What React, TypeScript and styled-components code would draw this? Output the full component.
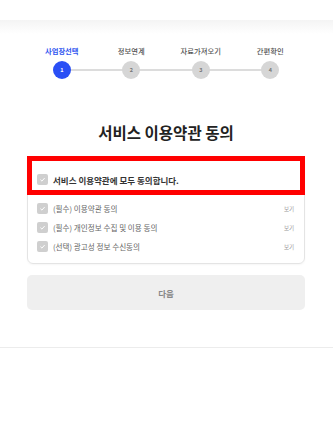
import React from "react";
import styled, { createGlobalStyle } from "styled-components";

const GlobalStyle = createGlobalStyle`
  body {
    margin: 0;
    background: #fff;
    font-family: "Noto Sans CJK KR", "Noto Sans", sans-serif;
    color: #333;
  }
`;

const Header = styled.header`
  height: 20px;
  background: #fff;
`;

const Main = styled.main`
  background: linear-gradient(#f4f4f4, #fff 14px);
  padding: 26px 28px 37px 27px;
`;

const Stepper = styled.ol`
  list-style: none;
  margin: 0;
  padding: 0;
  display: grid;
  grid-template-columns: repeat(4, 1fr);
`;

const Step = styled.li<{ $last?: boolean }>`
  position: relative;
  display: flex;
  flex-direction: column;
  align-items: center;
  gap: 5px;

  // connector to the next step
  &::before {
    content: "";
    display: ${(p) => (p.$last ? "none" : "block")};
    position: absolute;
    left: 50%;
    width: 100%;
    top: 23px;
    height: 2px;
    background: #dcdcdc;
  }
`;

const StepLabel = styled.span<{ $active?: boolean }>`
  font-size: 7.3px;
  line-height: 10px;
  font-weight: ${(p) => (p.$active ? 700 : 500)};
  color: ${(p) => (p.$active ? "#2f55f0" : "#555")};
  white-space: nowrap;
`;

const StepDot = styled.span<{ $active?: boolean }>`
  position: relative;
  z-index: 1;
  width: 18px;
  height: 18px;
  border-radius: 50%;
  background: ${(p) => (p.$active ? "#2a4ff5" : "#d6d6d6")};
  color: ${(p) => (p.$active ? "#fff" : "#777")};
  font-size: 5.5px;
  font-weight: 700;
  display: flex;
  align-items: center;
  justify-content: center;
`;

const Title = styled.h2`
  margin: 43px 0 14px;
  text-align: center;
  font-size: 15.5px;
  line-height: 20px;
  font-weight: 700;
  color: #222;
`;

const Card = styled.div`
  position: relative;
  border: 1px solid #e4e4e4;
  border-radius: 6px;
  box-shadow: 0 1px 2px rgba(0, 0, 0, 0.04);
`;

const AllRow = styled.label`
  height: 38px;
  box-sizing: border-box;
  padding: 17px 9px 0;
  display: flex;
  align-items: flex-start;
  gap: 5px;
  font-size: 8.5px;
  line-height: 12px;
  font-weight: 700;
  color: #333;
`;

const Highlight = styled.div`
  position: absolute;
  top: -1px;
  left: -1px;
  right: -1px;
  height: 39px;
  border: 5px solid #ff0000;
  box-sizing: border-box;
  pointer-events: none;
`;

const List = styled.ul`
  list-style: none;
  margin: 0;
  padding: 4px 0 7px;
`;

const Row = styled.li`
  height: 19px;
  padding: 0 10px 0 9px;
  display: flex;
  align-items: center;
  gap: 5px;
`;

const RowText = styled.span`
  flex: 1;
  font-size: 7.6px;
  color: #666;
`;

const ViewLink = styled.span`
  font-size: 5.5px;
  color: #999;
`;

const Box = styled.span`
  width: 11px;
  height: 11px;
  flex: none;
  border-radius: 2px;
  background: #cfcfcf;
  display: flex;
  align-items: center;
  justify-content: center;
`;

const NextButton = styled.button`
  margin-top: 11px;
  width: 100%;
  height: 35px;
  border: none;
  border-radius: 5px;
  background: #efefef;
  color: #888;
  font-family: inherit;
  font-size: 8.5px;
  font-weight: 700;
`;

const Footer = styled.footer`
  border-top: 1px solid #ececec;
  height: 78px;
`;

const Check = () => (
  <Box>
    <svg width="7" height="7" viewBox="0 0 10 10">
      <path d="M2 5.2 L4.2 7.3 L8 3" fill="none" stroke="#fff" strokeWidth="1.4" />
    </svg>
  </Box>
);

const steps = ["사업장선택", "정보연계", "자료가져오기", "간편확인"];

const terms = [
  "(필수) 이용약관 동의",
  "(필수) 개인정보 수집 및 이용 동의",
  "(선택) 광고성 정보 수신동의",
];

export default function App() {
  return (
    <>
      <GlobalStyle />
      <Header />
      <Main>
        <Stepper>
          {steps.map((s, i) => (
            <Step key={s} $last={i === steps.length - 1}>
              <StepLabel $active={i === 0}>{s}</StepLabel>
              <StepDot $active={i === 0}>{i + 1}</StepDot>
            </Step>
          ))}
        </Stepper>

        <Title>서비스 이용약관 동의</Title>

        <Card>
          <AllRow>
            <Check />
            서비스 이용약관에 모두 동의합니다.
          </AllRow>
          <List>
            {terms.map((t) => (
              <Row key={t}>
                <Check />
                <RowText>{t}</RowText>
                <ViewLink>보기</ViewLink>
              </Row>
            ))}
          </List>
          <Highlight />
        </Card>

        <NextButton>다음</NextButton>
      </Main>
      <Footer />
    </>
  );
}
